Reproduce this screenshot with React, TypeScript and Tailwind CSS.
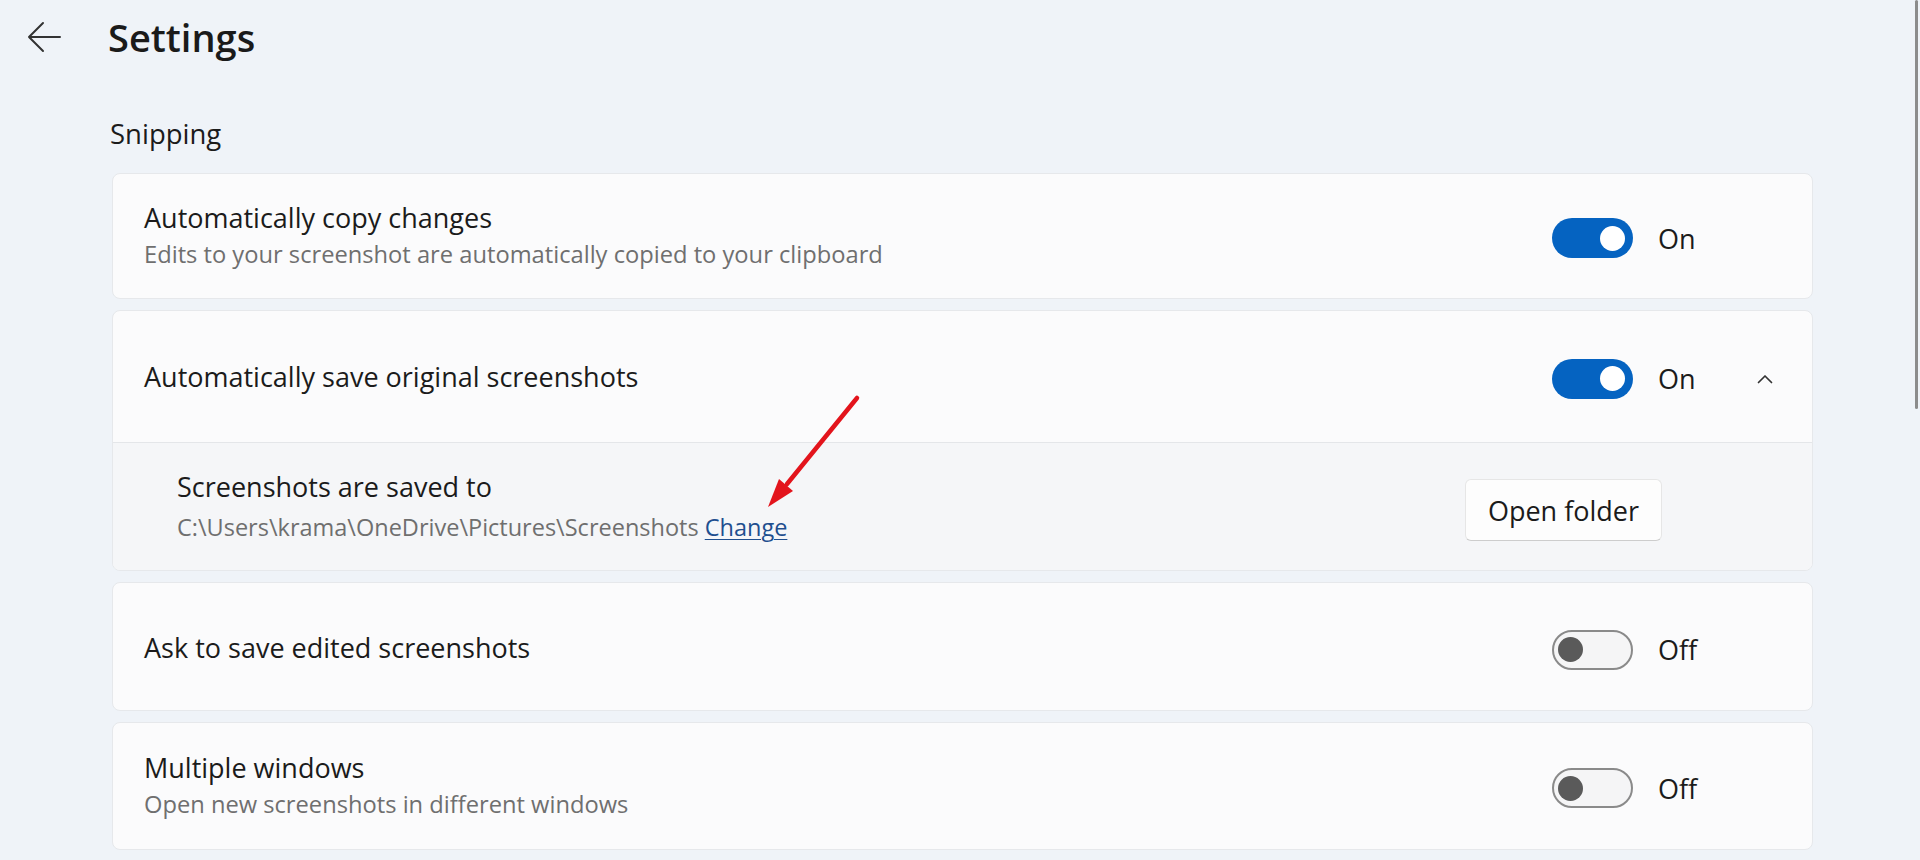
import React from 'react';

type ToggleProps = { on: boolean };

const Toggle: React.FC<ToggleProps> = ({ on }) =>
  on ? (
    <div className="flex h-[40px] w-[81px] items-center justify-end rounded-full bg-[#0563c1] pr-[8px]">
      <div className="h-[25px] w-[25px] rounded-full bg-white" />
    </div>
  ) : (
    <div className="flex h-[40px] w-[81px] items-center rounded-full border-2 border-[#8a8a8a] bg-[#f5f5f6] pl-[4px]">
      <div className="h-[25px] w-[25px] rounded-full bg-[#5a5a5a]" />
    </div>
  );

const ChevronUp = () => (
  <svg width="16" height="10" viewBox="0 0 16 10" fill="none">
    <polyline points="1.5,8.5 8,2 14.5,8.5" stroke="#333" strokeWidth="1.7" strokeLinecap="round" strokeLinejoin="round" />
  </svg>
);

type RightProps = { on: boolean; chevron?: boolean };

const ToggleGroup: React.FC<RightProps> = ({ on, chevron }) => (
  <div className="mt-[4px] flex items-center pr-[39px]">
    <Toggle on={on} />
    <span className="ml-[25px] w-[99px] text-[27px] leading-none text-[#1b1b1b]">{on ? 'On' : 'Off'}</span>
    <div className="flex w-[16px] items-center justify-center">{chevron && <ChevronUp />}</div>
  </div>
);

type TextProps = { title: string; subtitle?: string };

const RowText: React.FC<TextProps> = ({ title, subtitle }) => (
  <div className="flex-1">
    <div className="text-[27px] leading-[37px] text-[#1b1b1b]">{title}</div>
    {subtitle && <div className="text-[23.7px] leading-[37px] text-[#6f6f6f]">{subtitle}</div>}
  </div>
);

export default function App() {
  return (
    <div className="relative h-[860px] overflow-hidden bg-[#eff3f8] font-['Open_Sans',sans-serif] text-[#1b1b1b]">
      {/* scroll indicator */}
      <div className="absolute right-[2px] top-0 h-[409px] w-[3px] rounded-full bg-[#8c8c8c]" />

      {/* Header */}
      <header className="flex h-[74px] items-center">
        <button className="ml-[27px] flex h-[32px] w-[34px] items-center justify-center">
          <svg width="34" height="32" viewBox="0 0 34 32" fill="none">
            <path d="M33 16H2M2 16L16 2M2 16L16 30" stroke="#333" strokeWidth="2" strokeLinecap="round" strokeLinejoin="round" />
          </svg>
        </button>
        <h1 className="ml-[47px] text-[38px] font-semibold leading-none text-[#1a1a1a]">Settings</h1>
      </header>

      <main className="pl-[112px] pr-[107px]">
        <h2 className="-ml-[2px] mb-[19px] mt-[40px] flex h-[40px] items-center text-[27.5px] font-medium leading-none text-[#1b1b1b]">
          Snipping
        </h2>

        <div className="flex flex-col gap-[11px]">
          {/* Automatically copy changes */}
          <div className="flex h-[126px] items-center rounded-[8px] border border-[#e6e8eb] bg-[#fbfbfc] pl-[31px]">
            <RowText title="Automatically copy changes" subtitle="Edits to your screenshot are automatically copied to your clipboard" />
            <ToggleGroup on />
          </div>

          {/* Automatically save original screenshots (expanded) */}
          <div className="overflow-hidden rounded-[8px] border border-[#e6e8eb] bg-[#fbfbfc]">
            <div className="flex h-[131px] items-center pl-[31px]">
              <RowText title="Automatically save original screenshots" />
              <ToggleGroup on chevron />
            </div>
            <div className="flex h-[128px] items-center border-t border-[#e4e6e9] bg-[#f5f6f8] pl-[64px]">
              <div className="flex-1">
                <div className="text-[27px] leading-[40px] text-[#1b1b1b]">Screenshots are saved to</div>
                <div className="text-[23.5px] leading-[40px] text-[#6f6f6f]">
                  C:\Users\krama\OneDrive\Pictures\Screenshots{' '}
                  <a href="#" className="text-[#1f4f8f] underline decoration-1 underline-offset-[3px]">
                    Change
                  </a>
                </div>
              </div>
              <button className="mr-[150px] mt-[7px] flex h-[62px] w-[197px] items-center justify-center rounded-[6px] border border-[#e6e6e6] border-b-[#cdcdcd] bg-[#fdfdfd] text-[27px] leading-none text-[#1b1b1b]">
                Open folder
              </button>
            </div>
          </div>

          {/* Ask to save edited screenshots */}
          <div className="flex h-[129px] items-center rounded-[8px] border border-[#e6e8eb] bg-[#fbfbfc] pl-[31px] pt-[2px]">
            <RowText title="Ask to save edited screenshots" />
            <ToggleGroup on={false} />
          </div>

          {/* Multiple windows */}
          <div className="flex h-[128px] items-center rounded-[8px] border border-[#e6e8eb] bg-[#fbfbfc] pl-[31px]">
            <RowText title="Multiple windows" subtitle="Open new screenshots in different windows" />
            <ToggleGroup on={false} />
          </div>
        </div>
      </main>

      {/* red annotation arrow */}
      <svg className="pointer-events-none absolute left-[760px] top-[390px]" width="105" height="125" viewBox="0 0 105 125" fill="none">
        <line x1="97" y1="8" x2="27" y2="94" stroke="#e3141c" strokeWidth="4.5" strokeLinecap="round" />
        <polygon points="8,117 33,101 19,89" fill="#e3141c" />
      </svg>
    </div>
  );
}
